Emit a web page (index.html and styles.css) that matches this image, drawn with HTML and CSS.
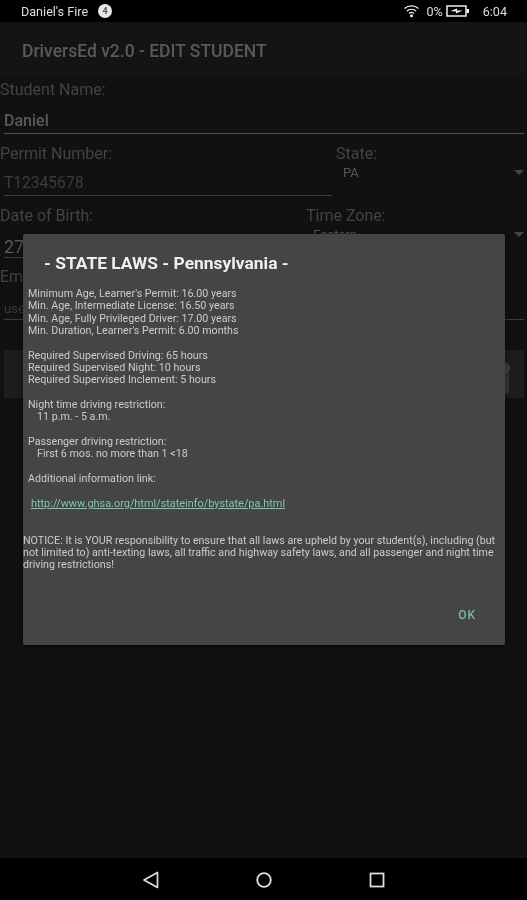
FILE: index.html
```html
<!DOCTYPE html>
<html lang="en">
<head>
    <meta charset="UTF-8">
    <meta name="viewport" content="width=device-width, initial-scale=1.0">
    <title>DriversEd v2.0 - EDIT STUDENT</title>
    <link rel="stylesheet" href="styles.css">
</head>
<body>
    <div class="screen">
        <div class="status-bar">
            <div class="status-left">
                <span>Daniel's Fire</span>
                <span class="badge">4</span>
            </div>
            <div class="status-right">
                <svg class="wifi" width="17" height="14" viewBox="0 0 16 14">
                    <path d="M1 4.5C5 1 11 1 15 4.5M3.3 7C6 4.8 10 4.8 12.7 7M5.5 9.4C7 8.2 9 8.2 10.5 9.4" fill="none" stroke="#eee" stroke-width="1.3"/>
                    <circle cx="8" cy="11.8" r="1.5" fill="#eee"/>
                </svg>
                <span class="pct">0%</span>
                <svg class="battery" width="24" height="12" viewBox="0 0 24 12">
                    <rect x="1" y="1" width="19" height="10" fill="none" stroke="#eee" stroke-width="1.5"/>
                    <rect x="20.5" y="4" width="2.5" height="4" fill="#eee"/>
                    <path d="M4.5 6L11 3.5V5.5H16.5L10 8.5V6.5Z" fill="#eee"/>
                </svg>
                <span class="clock">6:04</span>
            </div>
        </div>

        <div class="app-bar">DriversEd v2.0 - EDIT STUDENT</div>

        <main class="form">
            <div class="label name-label">Student Name:</div>
            <div class="input name-input">Daniel</div>

            <div class="row permit-row">
                <div class="permit-col">
                    <div class="label">Permit Number:</div>
                    <div class="input hint permit-input">T12345678</div>
                </div>
                <div class="state-col">
                    <div class="label">State:</div>
                    <div class="spinner">PA<span class="arrow"></span></div>
                </div>
            </div>

            <div class="row dob-row">
                <div class="dob-col">
                    <div class="label">Date of Birth:</div>
                    <div class="input dob-input">27</div>
                </div>
                <div class="zone-col">
                    <div class="label">Time Zone:</div>
                    <div class="spinner zone-spinner">Eastern<span class="arrow"></span></div>
                </div>
            </div>

            <div class="label email-label">Email:</div>
            <div class="input hint email-input">use</div>

            <div class="law-button">
                <svg class="law-icon" width="24" height="42" viewBox="0 0 24 42">
                    <circle cx="12" cy="14" r="6" fill="#3b4043"/>
                    <path d="M6 19H17V38C14 41 9 41 6 38Z" fill="#33373a"/>
                </svg>
            </div>
        </main>

        <div class="nav-bar">
            <svg width="18" height="18" viewBox="0 0 18 18"><path d="M15.5 1.5V16.5L2 9Z" fill="none" stroke="#ddd" stroke-width="1.7" stroke-linejoin="round"/></svg>
            <svg width="18" height="18" viewBox="0 0 18 18"><circle cx="9" cy="9" r="6.8" fill="none" stroke="#ddd" stroke-width="1.8"/></svg>
            <svg width="18" height="18" viewBox="0 0 18 18"><rect x="2.5" y="2.5" width="13" height="13" fill="none" stroke="#ddd" stroke-width="1.8"/></svg>
        </div>

        <div class="dialog">
            <h2 class="dialog-title">- STATE LAWS - Pennsylvania -</h2>
            <div class="laws">
                <p>Minimum Age, Learner's Permit: 16.00 years<br>Min. Age, Intermediate License: 16.50 years<br>Min. Age, Fully Privileged Driver: 17.00 years<br>Min. Duration, Learner's Permit: 6.00 months</p>
                <p>Required Supervised Driving: 65 hours<br>Required Supervised Night: 10 hours<br>Required Supervised Inclement: 5 hours</p>
                <p>Night time driving restriction:<br><span class="indent">11 p.m. - 5 a.m.</span></p>
                <p>Passenger driving restriction:<br><span class="indent">First 6 mos. no more than 1 &lt;18</span></p>
                <p>Additional information link:</p>
                <p><a class="law-link" href="#">http://www.ghsa.org/html/stateinfo/bystate/pa.html</a></p>
            </div>
            <p class="notice">NOTICE: It is YOUR responsibility to ensure that all laws are upheld by your student(s), including (but not limited to) anti-texting laws, all traffic and highway safety laws, and all passenger and night time driving restrictions!</p>
            <div class="dialog-actions"><span class="ok">OK</span></div>
        </div>
    </div>
</body>
</html>
```

FILE: styles.css
```css
* { box-sizing: border-box; }
html, body { margin: 0; padding: 0; background: #000; }
body { font-family: Roboto, 'Noto Sans', sans-serif; }
.screen { position: relative; width: 527px; height: 900px; display: flex; flex-direction: column; background: #111; overflow: hidden; filter: blur(0.45px); }

.status-bar { height: 22px; background: #000; color: #ddd; display: flex; justify-content: space-between; align-items: center; padding: 0 20px 0 21px; font-size: 12.6px; }
.status-left { display: flex; align-items: center; gap: 10px; }
.badge { width: 14px; height: 14px; border-radius: 50%; background: #e8e8e8; color: #555; font-size: 9px; font-weight: 700; display: flex; align-items: center; justify-content: center; }
.status-right { display: flex; align-items: center; }
.pct { margin-left: 6px; }
.battery { margin-left: 3px; }
.clock { margin-left: 13px; }

.app-bar { height: 56px; background: #141414; color: #5a5a5a; font-size: 17.5px; font-weight: 500; padding: 19px 0 0 22px; line-height: 20px; }

.form { flex: 1; padding: 0 3px 0 0; }
.label { color: #434343; font-size: 16px; line-height: 18px; }
.input { margin-left: 4px; border-bottom: 1px solid #3c3c3c; color: #5a5a5a; font-size: 16px; }
.name-label { margin-top: 3px; }
.name-input { margin-top: 12px; height: 23px; line-height: 19px; font-weight: 500; border-bottom: 1.5px solid #3f5a50; }
.row { display: flex; }
.permit-row { margin-top: 11px; height: 62px; }
.permit-col { width: 332px; }
.permit-input { margin-top: 11px; height: 22px; padding-top: 1px; font-size: 15.6px; line-height: 17px; }
.hint { color: #3c3c3c; }
.state-col { flex: 1; margin-left: 4px; }
.spinner { position: relative; color: #555; font-size: 13px; margin: 2px 0 0 7px; line-height: 15px; }
.arrow { position: absolute; right: 0; top: 5px; border-left: 5px solid transparent; border-right: 5px solid transparent; border-top: 5px solid #444; }
.dob-row { height: 61px; }
.dob-col { width: 302px; }
.dob-input { margin-top: 11px; height: 22px; padding-top: 1px; font-size: 18px; line-height: 20px; }
.zone-col { flex: 1; margin-left: 4px; }
.email-input { margin-top: 13px; height: 21px; padding-top: 2px; font-size: 13px; }
.law-button { position: relative; margin: 30px 0 0 4px; height: 48px; background: #1d1d1d; }
.law-icon { position: absolute; right: 8px; top: 4px; }

.nav-bar { height: 42px; background: #000; display: flex; justify-content: center; align-items: center; gap: 95px; padding: 2px 2px 0 2px; }

.dialog { position: absolute; left: 23px; top: 234px; width: 482px; height: 411px; background: #454545; border-radius: 2px; box-shadow: 0 2px 6px rgba(0,0,0,.5); display: flex; flex-direction: column; color: #ccc; }
.dialog-title { margin: 19px 0 0 21px; color: #f0f0f0; font-size: 17.4px; font-weight: 700; line-height: 21px; }
.laws { margin: 14px 0 0 5px; font-size: 10.7px; line-height: 12.35px; }
.laws p { margin: 0 0 12.35px; }
.indent { margin-left: 9px; }
.law-link { color: #7fc4b4; margin-left: 3px; font-size: 10.9px; }
.notice { margin: 12px 0 0; font-size: 10.7px; line-height: 12.35px; }
.dialog-actions { margin-top: auto; padding: 0 29px 22px 0; text-align: right; }
.ok { color: #7fb8a8; font-size: 12px; font-weight: 500; letter-spacing: 1px; }
```
